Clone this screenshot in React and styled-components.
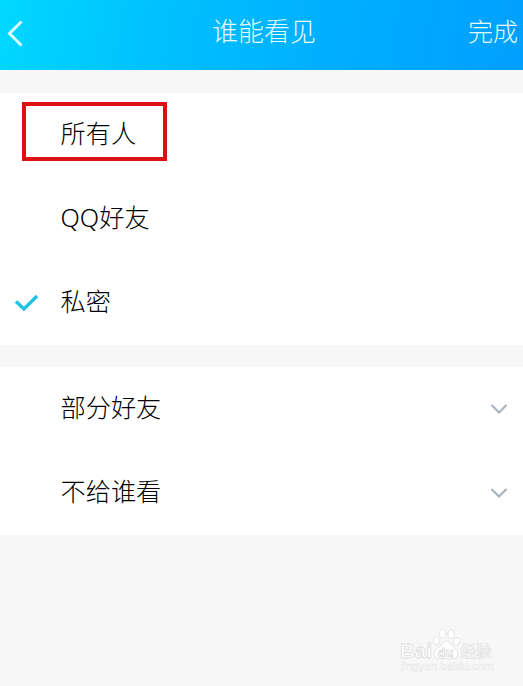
import React from 'react';
import styled, { createGlobalStyle } from 'styled-components';

const GlobalStyle = createGlobalStyle`
	* {
		box-sizing: border-box;
	}

	body {
		margin: 0;
		background: #f7f7f7;
		font-family: 'Noto Sans CJK SC', sans-serif;
	}
`;

const Page = styled.div`
	position: relative;
	height: 686px;
	overflow: hidden;
	background: #f7f7f7;
`;

const Header = styled.header`
	display: grid;
	grid-template-columns: 1fr auto 1fr;
	align-items: center;
	height: 70px;
	padding: 0 5px 6px 6px;
	color: #e6fbff;
	background: linear-gradient(100deg, #00d8ff 0%, #00c3ff 27%, #00b0ff 60%, #009fff 100%);
`;

const BackButton = styled.button`
	display: flex;
	padding: 3px 0 0;
	border: 0;
	color: #d8fbff;
	background: none;
`;

const Title = styled.h1`
	margin: 0;
	padding: 0 0 4px 4px;
	font-size: 26px;
	font-weight: 300;
	line-height: 38px;
`;

const Done = styled.span`
	justify-self: end;
	padding-bottom: 5px;
	font-size: 25px;
	font-weight: 300;
	line-height: 38px;
`;

const Group = styled.section`
	margin-top: ${({ $gap }) => $gap}px;
	background: #fff;
`;

const Row = styled.div`
	position: relative;
	display: flex;
	align-items: center;
	height: 84px;
	padding: 0 15px 0 14px;
`;

const Mark = styled.span`
	display: flex;
	width: 46.5px;
`;

const Label = styled.span`
	flex: 1;
	padding-bottom: 3px;
	color: #000;
	font-family: 'Noto Sans', 'Noto Sans CJK SC', sans-serif;
	font-size: 25.2px;
	font-weight: 300;
	line-height: 37px;
`;

const Highlight = styled.div`
	position: absolute;
	top: 9px;
	left: 22px;
	width: 145px;
	height: 59px;
	border: 4px solid #dd1112;
`;

const Watermark = styled.svg`
	position: absolute;
	left: 396px;
	top: 624px;
`;

const BackIcon = () => (
	<svg width='18' height='28' viewBox='0 0 18 28' fill='none'>
		<path d='M15.5 1.5 3.5 13.5l12 12' stroke='currentColor' strokeWidth='3' />
	</svg>
);

const CheckIcon = () => (
	<svg width='25' height='20' viewBox='0 0 25 20' fill='none'>
		<path d='m2 8.5 8 7.5L23 3' stroke='#1fc3e2' strokeWidth='3.4' />
	</svg>
);

const ChevronIcon = () => (
	<svg width='18' height='12' viewBox='0 0 18 12' fill='none'>
		<path d='m1.5 2 7.5 7.5L16.5 2' stroke='#aab4bf' strokeWidth='2.2' />
	</svg>
);

const Logo = () => (
	<Watermark width='110' height='52' viewBox='0 0 110 52'>
		<g fill='#fff' stroke='#dedede' strokeWidth='.8'>
			<text
				x='4'
				y='34'
				fontFamily='Liberation Sans, sans-serif'
				fontWeight='700'
				fontSize='20'
				textLength='32'
				lengthAdjust='spacingAndGlyphs'
			>
				Bai
			</text>
			<ellipse cx='40.3' cy='16.7' rx='3' ry='4' transform='rotate(-12 40.3 16.7)' />
			<ellipse cx='46.7' cy='9.7' rx='3.2' ry='4.4' />
			<ellipse cx='55' cy='10.3' rx='3.2' ry='4.4' transform='rotate(8 55 10.3)' />
			<ellipse cx='60.5' cy='17.5' rx='3' ry='4' transform='rotate(20 60.5 17.5)' />
			<path d='M50.5 17c-3.5 0-4.5 3.5-7.5 6-3.5 2.5-5.5 5-4.5 8.5 1 3.5 5 3.5 12 3 7 .5 10 .5 11-3s-1-6-4.5-8.5c-3-2.5-3-6-6.5-6Z' />
			<text
				x='41.5'
				y='32.7'
				fontFamily='Liberation Sans, sans-serif'
				fontSize='12.5'
				fontWeight='700'
				textLength='16'
				lengthAdjust='spacingAndGlyphs'
			>
				du
			</text>
			<text
				x='64.5'
				y='33'
				strokeWidth='.6'
				fontFamily='Noto Sans CJK SC, sans-serif'
				fontSize='15.5'
				fontWeight='500'
			>
				经验
			</text>
		</g>
		<text
			x='4.5'
			y='46'
			fill='#fff'
			stroke='#e8e8e8'
			strokeWidth='.5'
			fontFamily='Liberation Sans, sans-serif'
			fontSize='10.5'
			textLength='93'
			lengthAdjust='spacingAndGlyphs'
		>
			jingyan.baidu.com
		</text>
	</Watermark>
);

const App = () => {
	return (
		<Page>
			<GlobalStyle />
			<Header>
				<BackButton>
					<BackIcon />
				</BackButton>
				<Title>谁能看见</Title>
				<Done>完成</Done>
			</Header>

			<Group $gap={23}>
				<Option text='所有人' highlighted />
				<Option text='QQ好友' />
				<Option text='私密' checked />
			</Group>

			<Group $gap={22}>
				<Option text='部分好友' expandable />
				<Option text='不给谁看' expandable />
			</Group>

			<Logo />
		</Page>
	);
};

export default App;

export const Option = ({ text, checked, expandable, highlighted }) => {
	return (
		<Row>
			<Mark>{checked && <CheckIcon />}</Mark>
			<Label>{text}</Label>
			{expandable && <ChevronIcon />}
			{highlighted && <Highlight />}
		</Row>
	);
};
